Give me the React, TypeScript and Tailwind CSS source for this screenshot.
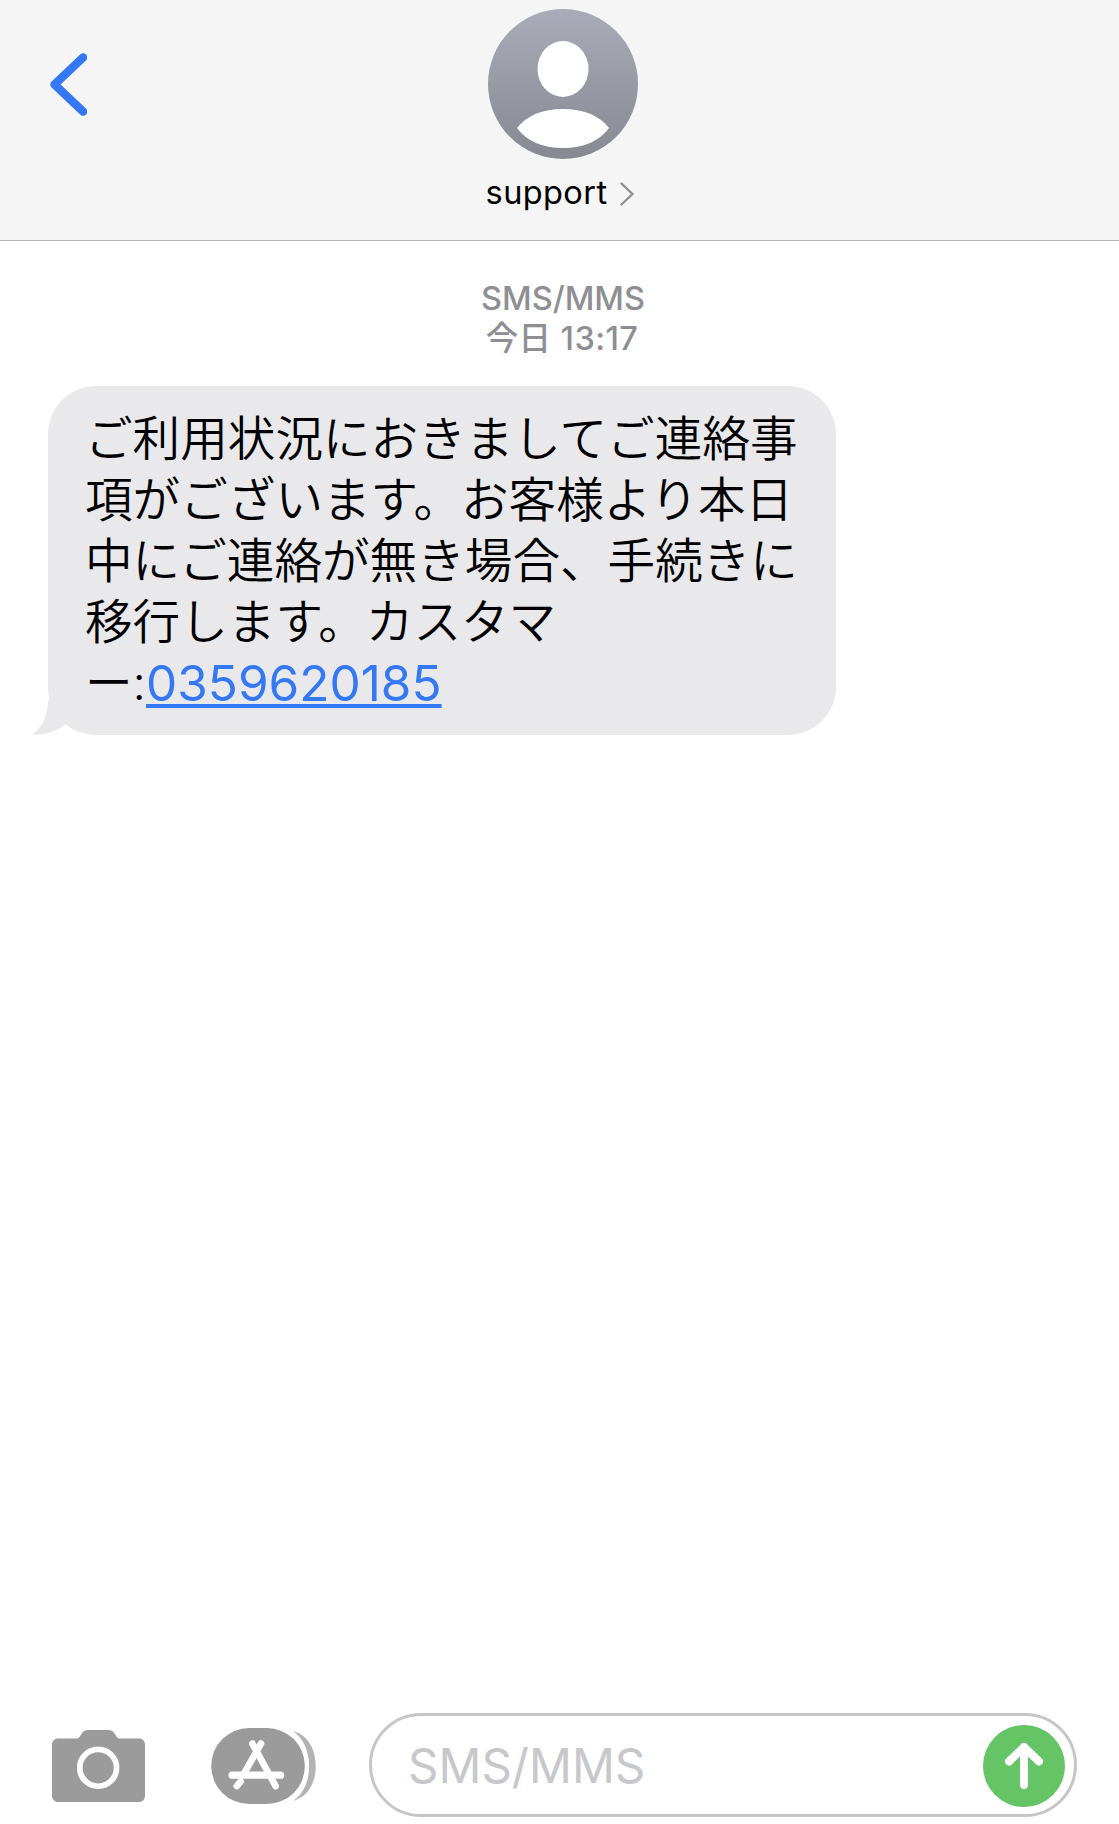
import React from "react";

const latinCjk = "font-['Inter','Noto_Sans_CJK_JP',sans-serif]";

function Avatar() {
  return (
    <svg width="150" height="150" viewBox="0 0 150 150" className="block shrink-0">
      <defs>
        <linearGradient id="av" x1="0" y1="0" x2="0" y2="1">
          <stop offset="0" stopColor="#a9acb8" />
          <stop offset="1" stopColor="#868992" />
        </linearGradient>
      </defs>
      <circle cx="75" cy="75" r="75" fill="url(#av)" />
      <ellipse cx="75" cy="60" rx="25.5" ry="28" fill="#fff" />
      <path d="M29 119 Q44 100 75 100 Q106 100 121 119 Q106 139 75 139 Q44 139 29 119 Z" fill="#fff" />
    </svg>
  );
}

function Camera() {
  return (
    <svg width="93" height="72" viewBox="97 120 278 215" className="block">
      <path
        d="M115 145 H172 C178 145 180 138 186 130 C191 123 197 120 205 120 H265 C273 120 279 123 284 130 C290 138 292 145 298 145 H357 C367 145 375 153 375 163 V317 C375 327 367 335 357 335 H115 C105 335 97 327 97 317 V163 C97 153 105 145 115 145 Z"
        fill="#9b9b9b"
      />
      <circle cx="235" cy="233" r="55" fill="none" stroke="#fff" strokeWidth="17" />
    </svg>
  );
}

function AppStore() {
  return (
    <svg width="105" height="76" viewBox="573 113 315 229" className="block">
      <path d="M820 122 C866 134 888 180 888 228 C888 276 866 320 820 333 C852 310 868 272 868 228 C868 184 852 146 820 122 Z" fill="#b4b4b4" />
      <rect x="573" y="113" width="282" height="229" rx="114" fill="#9b9b9b" />
      <g stroke="#fff" strokeLinecap="round" fill="none">
        <path d="M697 160 L767 288" strokeWidth="20" />
        <path d="M723 160 L672 250" strokeWidth="20" />
        <path d="M636 255 H782" strokeWidth="22" />
        <path d="M662 274 L650 288" strokeWidth="20" />
      </g>
    </svg>
  );
}

export default function App() {
  return (
    <div className={`flex h-[1824px] w-[1119px] flex-col overflow-hidden bg-white ${latinCjk}`}>
      <header className="relative flex h-[241px] shrink-0 flex-col items-center border-b border-[#b5b5b5] bg-[#f5f5f5] pl-[7px] pt-[9px]">
        <svg width="37" height="63" viewBox="0 0 37 63" className="absolute left-[50px] top-[53px]">
          <path d="M33 4.5 L4.5 31.5 L33 58.5" fill="none" stroke="#3478f6" strokeWidth="8.5" strokeLinecap="round" strokeLinejoin="round" />
        </svg>
        <Avatar />
        <div className="mt-[14px] flex items-center gap-[13px] pr-[6px]">
          <span className="text-[32.5px] leading-[40px] tracking-[0.4px] text-black">support</span>
          <svg width="14" height="24" viewBox="0 0 14 24" className="mt-[2px]">
            <path d="M1.5 1.5 L12.5 12 L1.5 22.5" fill="none" stroke="#8e8e93" strokeWidth="2.4" strokeLinecap="round" strokeLinejoin="round" />
          </svg>
        </div>
      </header>

      <main className="flex flex-1 flex-col">
        <div className="pt-[38px] text-center text-[32.5px] font-medium leading-[40px] text-[#8e8e93]">
          <div className="pl-[7px]">SMS/MMS</div>
          <div className="pl-[5px] tracking-[0.4px]">今日 13:17</div>
        </div>
        <div className="relative ml-[48px] mt-[27px] h-[349px] w-[788px] rounded-[48px] bg-[#e9e9eb] px-[37px] py-[22px] text-[47.6px] font-[350] leading-[61px] text-black">
          <svg width="35" height="35" viewBox="0 0 35 35" className="absolute bottom-0 left-[-16px]">
            <path d="M16 0 C16 15 10 28 0 34.5 C13 35.5 26 31 35 23 L35 0 Z" fill="#e9e9eb" />
          </svg>
          <p className="whitespace-nowrap">
            ご利用状況におきましてご連絡事<br />
            項がございます。お客様より本日<br />
            中にご連絡が無き場合、手続きに<br />
            移行します。カスタマ<br />
            ー:<span className="relative top-[1px] text-[49.5px] font-normal text-[#3478f6] underline">0359620185</span>
          </p>
        </div>
      </main>

      <footer className="flex h-[118px] shrink-0 items-start pl-[52px] pr-[42px] pt-[7px]">
        <div className="mt-[17px]"><Camera /></div>
        <div className="ml-[66px] mt-[15px]"><AppStore /></div>
        <div className="ml-[53px] flex h-[104px] w-[708px] items-center justify-between rounded-full border-[3px] border-[#c6c6c8] pl-[36px] pr-[9px]">
          <span className="mt-[2px] text-[47.5px] text-[#c7c7cc]">SMS/MMS</span>
          <svg width="82" height="82" viewBox="0 0 82 82" className="mt-[2px] shrink-0">
            <circle cx="41" cy="41" r="41" fill="#65c466" />
            <path d="M41 60 V22 M26 36.5 L41 22 L56 36.5" fill="none" stroke="#fff" strokeWidth="8" strokeLinecap="round" strokeLinejoin="round" />
          </svg>
        </div>
      </footer>
    </div>
  );
}
